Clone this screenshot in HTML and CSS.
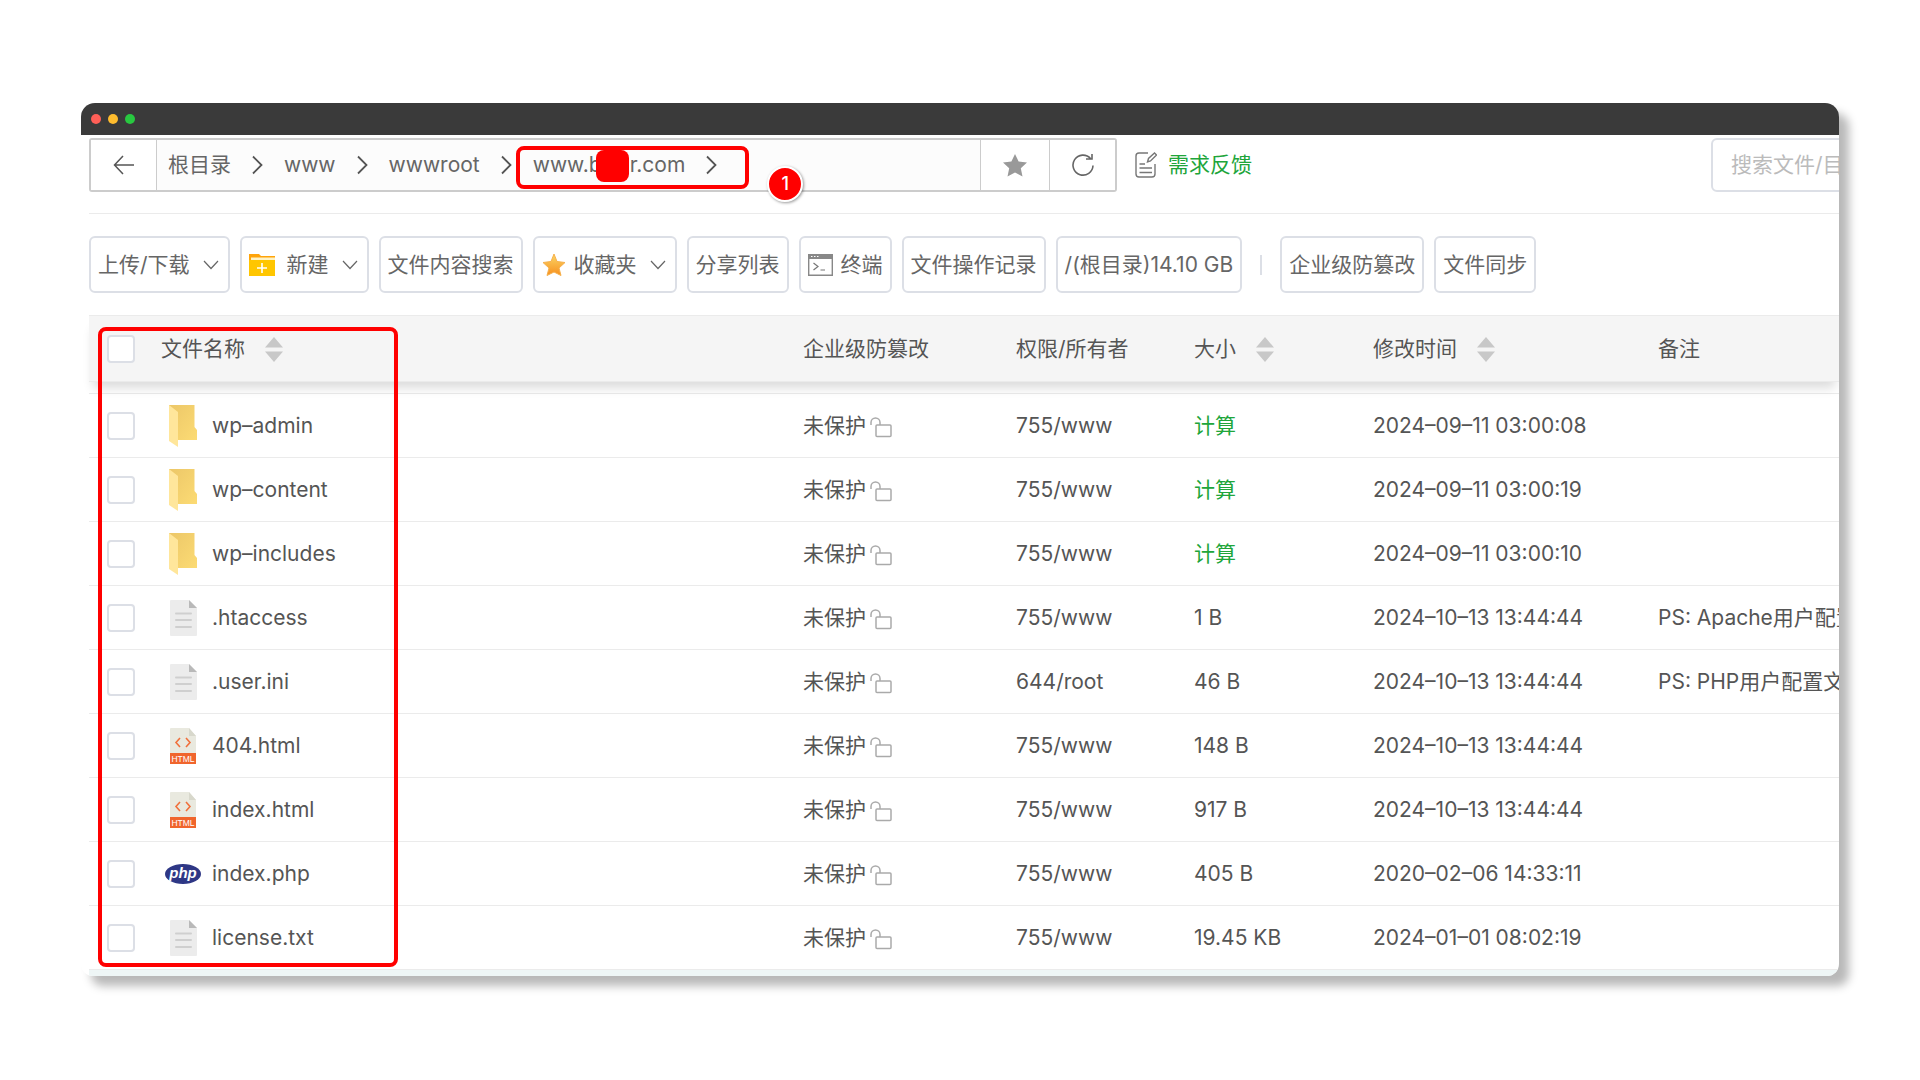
FILE: index.html
```html
<!DOCTYPE html>
<html lang="zh-CN">
<head>
<meta charset="utf-8">
<title>文件管理</title>
<link rel="stylesheet" href="styles.css">
</head>
<body>
<svg class="sprite" aria-hidden="true">
  <defs>
    <linearGradient id="folder-back" x1="0" y1="0" x2="1" y2="1"><stop offset="0" stop-color="#ecc768"/><stop offset="1" stop-color="#fcdb74"/></linearGradient>
    <linearGradient id="star-fill" x1="0" y1="0" x2="0" y2="1"><stop offset="0" stop-color="#fbd766"/><stop offset="1" stop-color="#f78f1e"/></linearGradient>
    <symbol id="i-folder" viewBox="0 0 28 42"><path d="M0 0h25.500v22l2.500 3v10H0z" fill="url(#folder-back)"/><path d="M0 0l9 7v35L0 36z" fill="#ffe69b"/></symbol>
    <symbol id="i-file" viewBox="0 0 27 36"><path d="M1 0h18l8 8v27q0 1-1 1H1q-1 0-1-1V1q0-1 1-1z" fill="#ececec"/><path d="M19 0l8 8h-8z" fill="#b9b9b9"/><path d="M6 13.500h15M6 20h15M6 27h15" stroke="#cfcfcf" stroke-width="2" stroke-linecap="round"/></symbol>
    <symbol id="i-html" viewBox="0 0 27 36"><path d="M1 0h18l7 8v18H0V1q0-1 1-1z" fill="#e9e9df"/><path d="M19 0l7 8h-7z" fill="#d8d8cc"/><path d="M10 10l-4 4.500 4 4.500M16 10l4 4.500-4 4.500" fill="none" stroke="#f0703c" stroke-width="1.600"/><path d="M0 25h26v11H0z" fill="#f0652d"/><text x="13" y="34" font-family="Liberation Sans, sans-serif" font-size="8.500" fill="#fff" text-anchor="middle">HTML</text></symbol>
    <symbol id="i-php" viewBox="0 0 36 20"><ellipse cx="18" cy="10" rx="18" ry="10" fill="#2e3785"/><text x="18" y="14" font-family="Liberation Sans, sans-serif" font-size="15" font-weight="bold" font-style="italic" fill="#fff" text-anchor="middle">php</text></symbol>
    <symbol id="i-lock" viewBox="0 0 22 21"><path d="M1 8V5.500a4.500 4.500 0 0 1 9 0V8" fill="none" stroke="#aaa" stroke-width="1.500"/><rect x="6" y="8" width="15" height="11.500" rx="1" fill="none" stroke="#aaa" stroke-width="1.500"/></symbol>
    <symbol id="i-sort" viewBox="0 0 18 25"><path d="M9 0l9 10.500H0zM9 25l9-10.500H0z" fill="#c8c8c8"/></symbol>
    <symbol id="i-next" viewBox="0 0 12 20"><path d="M1.500 1.500L10 10l-8.500 8.500" fill="none" stroke="#555" stroke-width="1.800"/></symbol>
    <symbol id="i-down" viewBox="0 0 16 10"><path d="M1 1l7 7.500L15 1" fill="none" stroke="#666" stroke-width="1.200"/></symbol>
  </defs>
</svg>

<main class="window">
  <header class="titlebar"><i class="dot dot-red"></i><i class="dot dot-yellow"></i><i class="dot dot-green"></i></header>

  <div class="content">
    <div class="nav">
      <div class="address">
        <button class="nav-btn" aria-label="返回"><svg width="22" height="20" viewBox="0 0 22 20"><path d="M10 1L1.500 10l8.500 9M1.500 10H21" fill="none" stroke="#555" stroke-width="1.500"/></svg></button>
        <nav class="crumbs">
          <a href="#">根目录</a><svg class="next"><use href="#i-next"/></svg>
          <a href="#">www</a><svg class="next"><use href="#i-next"/></svg>
          <a href="#">wwwroot</a><svg class="next"><use href="#i-next"/></svg>
          <div class="current">
            <a href="#">www.b<span class="redacted"></span>r.com</a><svg class="next"><use href="#i-next"/></svg>
            <span class="mark mark-path"></span>
            <span class="step">1</span>
          </div>
        </nav>
        <button class="nav-btn" aria-label="收藏"><svg width="24" height="23" viewBox="0 0 24 23"><path d="M12 0l3.600 7.600 8.400 1-6.200 5.700 1.700 8.200L12 18.400l-7.500 4.100 1.700-8.200L0 8.600l8.400-1z" fill="#999"/></svg></button>
        <button class="nav-btn" aria-label="刷新"><svg width="22" height="22" viewBox="0 0 22 22"><path d="M21 11.500A10 10 0 1 1 18.500 4.500M14 5h6V0" fill="none" stroke="#666" stroke-width="1.600"/></svg></button>
      </div>
      <a class="feedback" href="#"><svg width="22" height="26" viewBox="0 0 22 26"><path d="M13 1H4Q1 1 1 4v18q0 3 3 3h13q3 0 3-3V12M4.500 12H10M4.500 16h12.500M4.500 20.500h12.500" fill="none" stroke="#777" stroke-width="1.400"/><path d="M12.500 10l1-3.500 6-5.500 2 2-6 6z" fill="#fff" stroke="#777" stroke-width="1.400"/></svg>需求反馈</a>
      <input class="search" type="text" placeholder="搜索文件/目录" aria-label="搜索文件/目录">
    </div>

    <div class="toolbar">
      <button class="btn">上传/下载<svg class="down"><use href="#i-down"/></svg></button>
      <button class="btn"><svg class="lead" width="26" height="24" viewBox="0 0 26 24"><path d="M0 1h10l2 2h14v20H0z" fill="#ffa40a"/><path d="M2 4.500h24V8H2z" fill="#fff3c4"/><path d="M0 7h26v15q0 1-1 1H1q-1 0-1-1z" fill="#ffc600"/><path d="M13 10v10M8 15h10" stroke="#fff" stroke-width="1.600"/></svg>新建<svg class="down"><use href="#i-down"/></svg></button>
      <button class="btn">文件内容搜索</button>
      <button class="btn"><svg class="star" width="24" height="24" viewBox="0 0 24 24"><path d="M12 1l3 7.500 8 1-6 5.500 2 7.500-7-3.500-7 3.500 2-7.500-6-5.500 8-1z" fill="url(#star-fill)" stroke="#f6b04c"/></svg>收藏夹<svg class="down"><use href="#i-down"/></svg></button>
      <button class="btn">分享列表</button>
      <button class="btn"><svg class="term" width="25" height="22" viewBox="0 0 25 22"><path d="M.7.700h23.600v20.600H.7z" fill="#fff" stroke="#888" stroke-width="1.400"/><path d="M0 0h25v5H0z" fill="#888"/><path d="M3 2.500h1.500M6 2.500h1.500M9 2.500h1.500" stroke="#fff" stroke-width="1.200"/><path d="M5.500 9l4.500 3.500L5.500 16M12.500 16H17" fill="none" stroke="#777" stroke-width="1.200"/></svg>终端</button>
      <button class="btn">文件操作记录</button>
      <button class="btn">/(根目录)14.10 GB</button>
      <span class="sep"></span>
      <button class="btn">企业级防篡改</button>
      <button class="btn">文件同步</button>
    </div>

    <div class="list">
      <table>
        <colgroup><col class="c-check"><col><col class="c-guard"><col class="c-owner"><col class="c-size"><col class="c-time"><col class="c-note"></colgroup>
        <thead>
          <tr><th class="check"><input type="checkbox" aria-label="全选"></th><th>文件名称<svg class="sort"><use href="#i-sort"/></svg></th><th>企业级防篡改</th><th>权限/所有者</th><th>大小<svg class="sort"><use href="#i-sort"/></svg></th><th>修改时间<svg class="sort"><use href="#i-sort"/></svg></th><th>备注</th></tr>
        </thead>
        <tbody>
          <tr class="scrolled"><td colspan="7"></td></tr>
          <tr><td class="check"><input type="checkbox" aria-label="wp-admin"></td><td><div class="name"><span class="icon"><svg width="28" height="42"><use href="#i-folder"/></svg></span>wp–admin</div></td><td>未保护<svg class="lock"><use href="#i-lock"/></svg></td><td>755/www</td><td><a href="#">计算</a></td><td>2024–09–11 03:00:08</td><td></td></tr>
          <tr><td class="check"><input type="checkbox" aria-label="wp-content"></td><td><div class="name"><span class="icon"><svg width="28" height="42"><use href="#i-folder"/></svg></span>wp–content</div></td><td>未保护<svg class="lock"><use href="#i-lock"/></svg></td><td>755/www</td><td><a href="#">计算</a></td><td>2024–09–11 03:00:19</td><td></td></tr>
          <tr><td class="check"><input type="checkbox" aria-label="wp-includes"></td><td><div class="name"><span class="icon"><svg width="28" height="42"><use href="#i-folder"/></svg></span>wp–includes</div></td><td>未保护<svg class="lock"><use href="#i-lock"/></svg></td><td>755/www</td><td><a href="#">计算</a></td><td>2024–09–11 03:00:10</td><td></td></tr>
          <tr><td class="check"><input type="checkbox" aria-label=".htaccess"></td><td><div class="name"><span class="icon"><svg width="27" height="36"><use href="#i-file"/></svg></span>.htaccess</div></td><td>未保护<svg class="lock"><use href="#i-lock"/></svg></td><td>755/www</td><td>1 B</td><td>2024–10–13 13:44:44</td><td>PS: Apache用户配置文件</td></tr>
          <tr><td class="check"><input type="checkbox" aria-label=".user.ini"></td><td><div class="name"><span class="icon"><svg width="27" height="36"><use href="#i-file"/></svg></span>.user.ini</div></td><td>未保护<svg class="lock"><use href="#i-lock"/></svg></td><td>644/root</td><td>46 B</td><td>2024–10–13 13:44:44</td><td>PS: PHP用户配置文件</td></tr>
          <tr><td class="check"><input type="checkbox" aria-label="404.html"></td><td><div class="name"><span class="icon"><svg width="27" height="36"><use href="#i-html"/></svg></span>404.html</div></td><td>未保护<svg class="lock"><use href="#i-lock"/></svg></td><td>755/www</td><td>148 B</td><td>2024–10–13 13:44:44</td><td></td></tr>
          <tr><td class="check"><input type="checkbox" aria-label="index.html"></td><td><div class="name"><span class="icon"><svg width="27" height="36"><use href="#i-html"/></svg></span>index.html</div></td><td>未保护<svg class="lock"><use href="#i-lock"/></svg></td><td>755/www</td><td>917 B</td><td>2024–10–13 13:44:44</td><td></td></tr>
          <tr><td class="check"><input type="checkbox" aria-label="index.php"></td><td><div class="name"><span class="icon"><svg width="36" height="20"><use href="#i-php"/></svg></span>index.php</div></td><td>未保护<svg class="lock"><use href="#i-lock"/></svg></td><td>755/www</td><td>405 B</td><td>2020–02–06 14:33:11</td><td></td></tr>
          <tr><td class="check"><input type="checkbox" aria-label="license.txt"></td><td><div class="name"><span class="icon"><svg width="27" height="36"><use href="#i-file"/></svg></span>license.txt</div></td><td>未保护<svg class="lock"><use href="#i-lock"/></svg></td><td>755/www</td><td>19.45 KB</td><td>2024–01–01 08:02:19</td><td></td></tr>
        </tbody>
      </table>
      <span class="mark mark-files"></span>
    </div>
    <div class="next-row"></div>
  </div>
</main>
</body>
</html>
```
FILE: styles.css
```css
* { box-sizing: border-box; }
body {
  margin: 0;
  padding: 103px 81px;
  background: #fff;
  color: #555;
  font: 21px/28px Inter, "Noto Sans CJK SC", sans-serif;
}
a { color: inherit; text-decoration: none; }
button, input { font: inherit; color: inherit; margin: 0; }
.sprite { position: absolute; width: 0; height: 0; }

.window {
  overflow: hidden;
  background: #fff;
  border-radius: 14px 14px 12px 12px;
  box-shadow: 10px 10px 10px rgba(0, 0, 0, .28);
}
.titlebar {
  display: flex;
  align-items: center;
  gap: 7px;
  height: 32px;
  padding-left: 10px;
  background: #3a3a3a;
}
.dot { width: 10px; height: 10px; border-radius: 50%; }
.dot-red { background: #ff5f57; }
.dot-yellow { background: #febc2e; }
.dot-green { background: #28c840; }
.content { padding-left: 8px; }

.nav {
  display: flex;
  padding: 3px 0 21px;
  border-bottom: 1px solid #ebebeb;
}
.address {
  display: flex;
  width: 1028px;
  height: 54px;
  border: 2px solid #ccc;
  border-radius: 3px;
}
.nav-btn {
  display: flex;
  flex: none;
  align-items: center;
  justify-content: center;
  width: 66px;
  padding: 0;
  background: #fff;
  border: 0;
  border-right: 1px solid #ccc;
}
.crumbs + .nav-btn { width: 69px; }
.nav-btn:last-child { width: 65px; border-right: 0; }
.crumbs {
  display: flex;
  flex: 1;
  background: #fcfcfc;
  border-right: 1px solid #ccc;
  color: #666;
  line-height: 50px;
}
.crumbs a { padding: 0 11px; }
.next { flex: none; align-self: center; width: 31px; height: 20px; }
.current { position: relative; display: flex; }
.redacted {
  display: inline-block;
  width: 33px;
  height: 32px;
  margin: 0 1px 0 -6px;
  border-radius: 8px;
  background: #f00;
  vertical-align: middle;
}
.mark {
  position: absolute;
  border: 4px solid #f00;
  border-radius: 8px;
  pointer-events: none;
}
.mark-path { left: -6px; right: -22px; top: 6px; height: 43px; }
.step {
  position: absolute;
  left: 100%;
  top: 26px;
  width: 36px;
  height: 36px;
  margin-left: 40px;
  border: 2px solid #fff;
  border-radius: 50%;
  background: #f00;
  box-shadow: 1px 1px 3px rgba(0, 0, 0, .4);
  color: #fff;
  font-size: 18px;
  font-weight: 500;
  line-height: 32px;
  text-align: center;
}
.feedback {
  display: flex;
  align-items: center;
  gap: 11px;
  margin: 0 auto 0 18px;
  color: #20a53a;
}
.search {
  width: 180px;
  margin-right: -52px;
  padding: 0 18px;
  border: 2px solid #dcdfe6;
  border-radius: 6px;
  background: #fff;
}
.search::placeholder { color: #bbb; opacity: 1; }

.toolbar { display: flex; align-items: center; gap: 10px; padding: 22px 0; }
.btn {
  display: flex;
  flex: none;
  align-items: center;
  height: 57px;
  padding: 0 7px;
  border: 2px solid #dcdfe6;
  border-radius: 6px;
  background: #fff;
  color: #666;
  white-space: nowrap;
}
.down { width: 16px; height: 10px; margin: 0 2px 0 13px; }
.lead { margin-right: 12px; }
.star { margin-right: 8px; }
.term { margin-right: 8px; }
.sep { width: 2px; height: 20px; margin: 0 8px; background: #dcdfe6; }

.list { position: relative; }
table { width: 100%; table-layout: fixed; border-collapse: separate; border-spacing: 0; }
.c-check { width: 62px; }
.c-guard { width: 213px; }
.c-owner { width: 178px; }
.c-size { width: 179px; }
.c-time { width: 285px; }
.c-note { width: 191px; }
th, td {
  height: 64px;
  padding: 0 0 0 10px;
  border-bottom: 1px solid #ebebeb;
  font-weight: 400;
  text-align: left;
  white-space: nowrap;
  overflow: hidden;
  vertical-align: middle;
}
thead { position: relative; box-shadow: 0 10px 10px -4px rgba(0, 0, 0, .14); }
th { height: 67px; background: #f5f5f5; border-top: 1px solid #ebebeb; }
.scrolled td { height: 12px; }
.check { padding-left: 18px; }
.check input {
  display: block;
  appearance: none;
  width: 28px;
  height: 28px;
  border: 2px solid #dcdfe6;
  border-radius: 4px;
  background: #fff;
}
td a { color: #20a53a; }
.name { display: flex; align-items: center; gap: 7px; }
.icon { display: flex; flex: none; justify-content: center; width: 44px; }
.sort { width: 18px; height: 25px; margin-left: 20px; vertical-align: middle; }
.lock { width: 22px; height: 21px; margin-left: 4px; vertical-align: -5px; }
.mark-files { left: 9px; top: 12px; bottom: 3px; width: 300px; }
.next-row { height: 6px; background: #eef6f6; }
```
